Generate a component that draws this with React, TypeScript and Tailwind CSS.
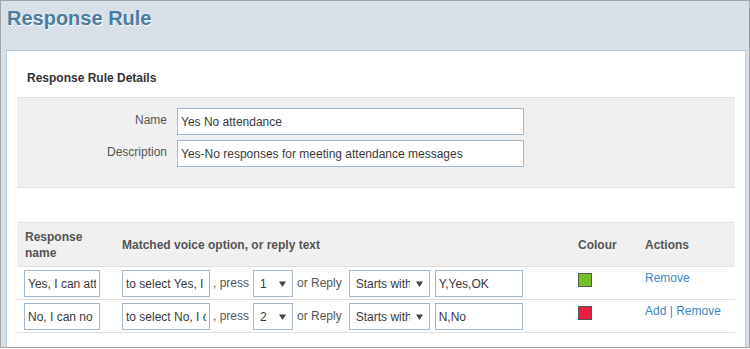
const font = { fontFamily: '"Liberation Sans", Arial, sans-serif' }

type Rule = {
  name: string
  voice: string
  key: string
  reply: string
  colour: string
  add: boolean
}

const rules: Rule[] = [
  { name: 'Yes, I can attend', voice: 'to select Yes, I can attend', key: '1', reply: 'Y,Yes,OK', colour: 'bg-[#72c12c]', add: false },
  { name: 'No, I can no longer attend', voice: 'to select No, I can not attend', key: '2', reply: 'N,No', colour: 'bg-[#ea1f45]', add: true },
]

function TextBox({ value, className }: { value: string; className: string }) {
  return (
    <input
      readOnly
      value={value}
      className={`h-[27px] border border-[#a3b8cb] bg-white px-[3px] text-[12px] text-[#3a3a3a] outline-none ${className}`}
      style={font}
    />
  )
}

function FakeSelect({ value, className }: { value: string; className: string }) {
  return (
    <div className={`flex h-[27px] items-center overflow-hidden border border-[#a3b8cb] bg-white pl-[6px] pr-[6px] text-[12px] text-[#3a3a3a] ${className}`}>
      <span className="min-w-0 flex-1 overflow-hidden whitespace-nowrap">{value}</span>
      <svg width="7" height="6" viewBox="0 0 7 6" className="ml-[6px] shrink-0">
        <polygon points="0,0.5 7,0.5 3.5,6" fill="#444" />
      </svg>
    </div>
  )
}

export default function App() {
  return (
    <div className="h-[349px] w-[750px] bg-white" style={font}>
      <div className="h-[348px] w-[750px] overflow-hidden border border-[#a4a4a4] bg-[#d8e1e9] bg-[image:repeating-conic-gradient(#d4dde6_0%_25%,#dbe3eb_0%_50%)] bg-[length:4px_4px]">
        <h1 className="pl-[6px] pt-[6px] text-[20px] font-bold leading-[23px] text-[#4c7d9f] [text-shadow:1px_1px_1px_rgba(255,255,255,0.9)]">
          Response Rule
        </h1>

        <div className="ml-[5px] mt-[20px] h-[400px] w-[740px] border border-[#b7cad9] bg-white px-[10px] pt-[20px]">
          <h2 className="px-[10px] text-[12px] font-bold leading-[14px] text-[#333]">Response Rule Details</h2>

          <div className="mt-[12px] border-y border-[#e0e0e0] bg-[#f0f0f0] pb-[20px] pt-[10px]">
            <div className="flex items-start">
              <label className="w-[150px] pt-[5px] text-right text-[12px] leading-[14px] text-[#555]">Name</label>
              <TextBox value="Yes No attendance" className="ml-[10px] w-[347px]" />
            </div>
            <div className="mt-[5px] flex items-start">
              <label className="w-[150px] pt-[5px] text-right text-[12px] leading-[14px] text-[#555]">Description</label>
              <TextBox value="Yes-No responses for meeting attendance messages" className="ml-[10px] w-[347px]" />
            </div>
          </div>

          <div className="mt-[34px] border-t border-[#e4e4e4]">
            <div className="grid h-[44px] grid-cols-[98px_456px_67px_1fr] items-center border-b border-[#e0e0e0] bg-[#f0f0f0] text-[12px] font-bold leading-[16px] text-[#555]">
              <div className="pl-[8px]">
                Response
                <br />
                name
              </div>
              <div className="pl-[7px]">Matched voice option, or reply text</div>
              <div className="pl-[7px]">Colour</div>
              <div className="pl-[7px]">Actions</div>
            </div>

            {rules.map((r) => (
              <div key={r.key} className="grid h-[33px] grid-cols-[98px_456px_67px_1fr] border-b border-[#e0e0e0] text-[12px] text-[#555]">
                <div className="pl-[7px] pt-[3px]">
                  <TextBox value={r.name} className="w-[76px]" />
                </div>
                <div className="flex items-start pl-[7px] pt-[3px]">
                  <TextBox value={r.voice} className="w-[88px]" />
                  <span className="ml-[3px] mt-[6px] leading-[14px]">, press</span>
                  <FakeSelect value={r.key} className="ml-[4px] w-[40px]" />
                  <span className="ml-[4px] mt-[6px] leading-[14px]">or Reply</span>
                  <FakeSelect value="Starts with" className="ml-[7px] w-[81px]" />
                  <TextBox value={r.reply} className="ml-[5px] w-[88px]" />
                </div>
                <div className="pl-[7px] pt-[6px]">
                  <div className={`h-[14px] w-[14px] border border-[#555] ${r.colour}`} />
                </div>
                <div className="pl-[7px] pt-[4px] leading-[14px] text-[#3b86c8]">
                  {r.add && (
                    <>
                      <a href="#">Add</a> |{' '}
                    </>
                  )}
                  <a href="#">Remove</a>
                </div>
              </div>
            ))}
          </div>
        </div>
      </div>
    </div>
  )
}
